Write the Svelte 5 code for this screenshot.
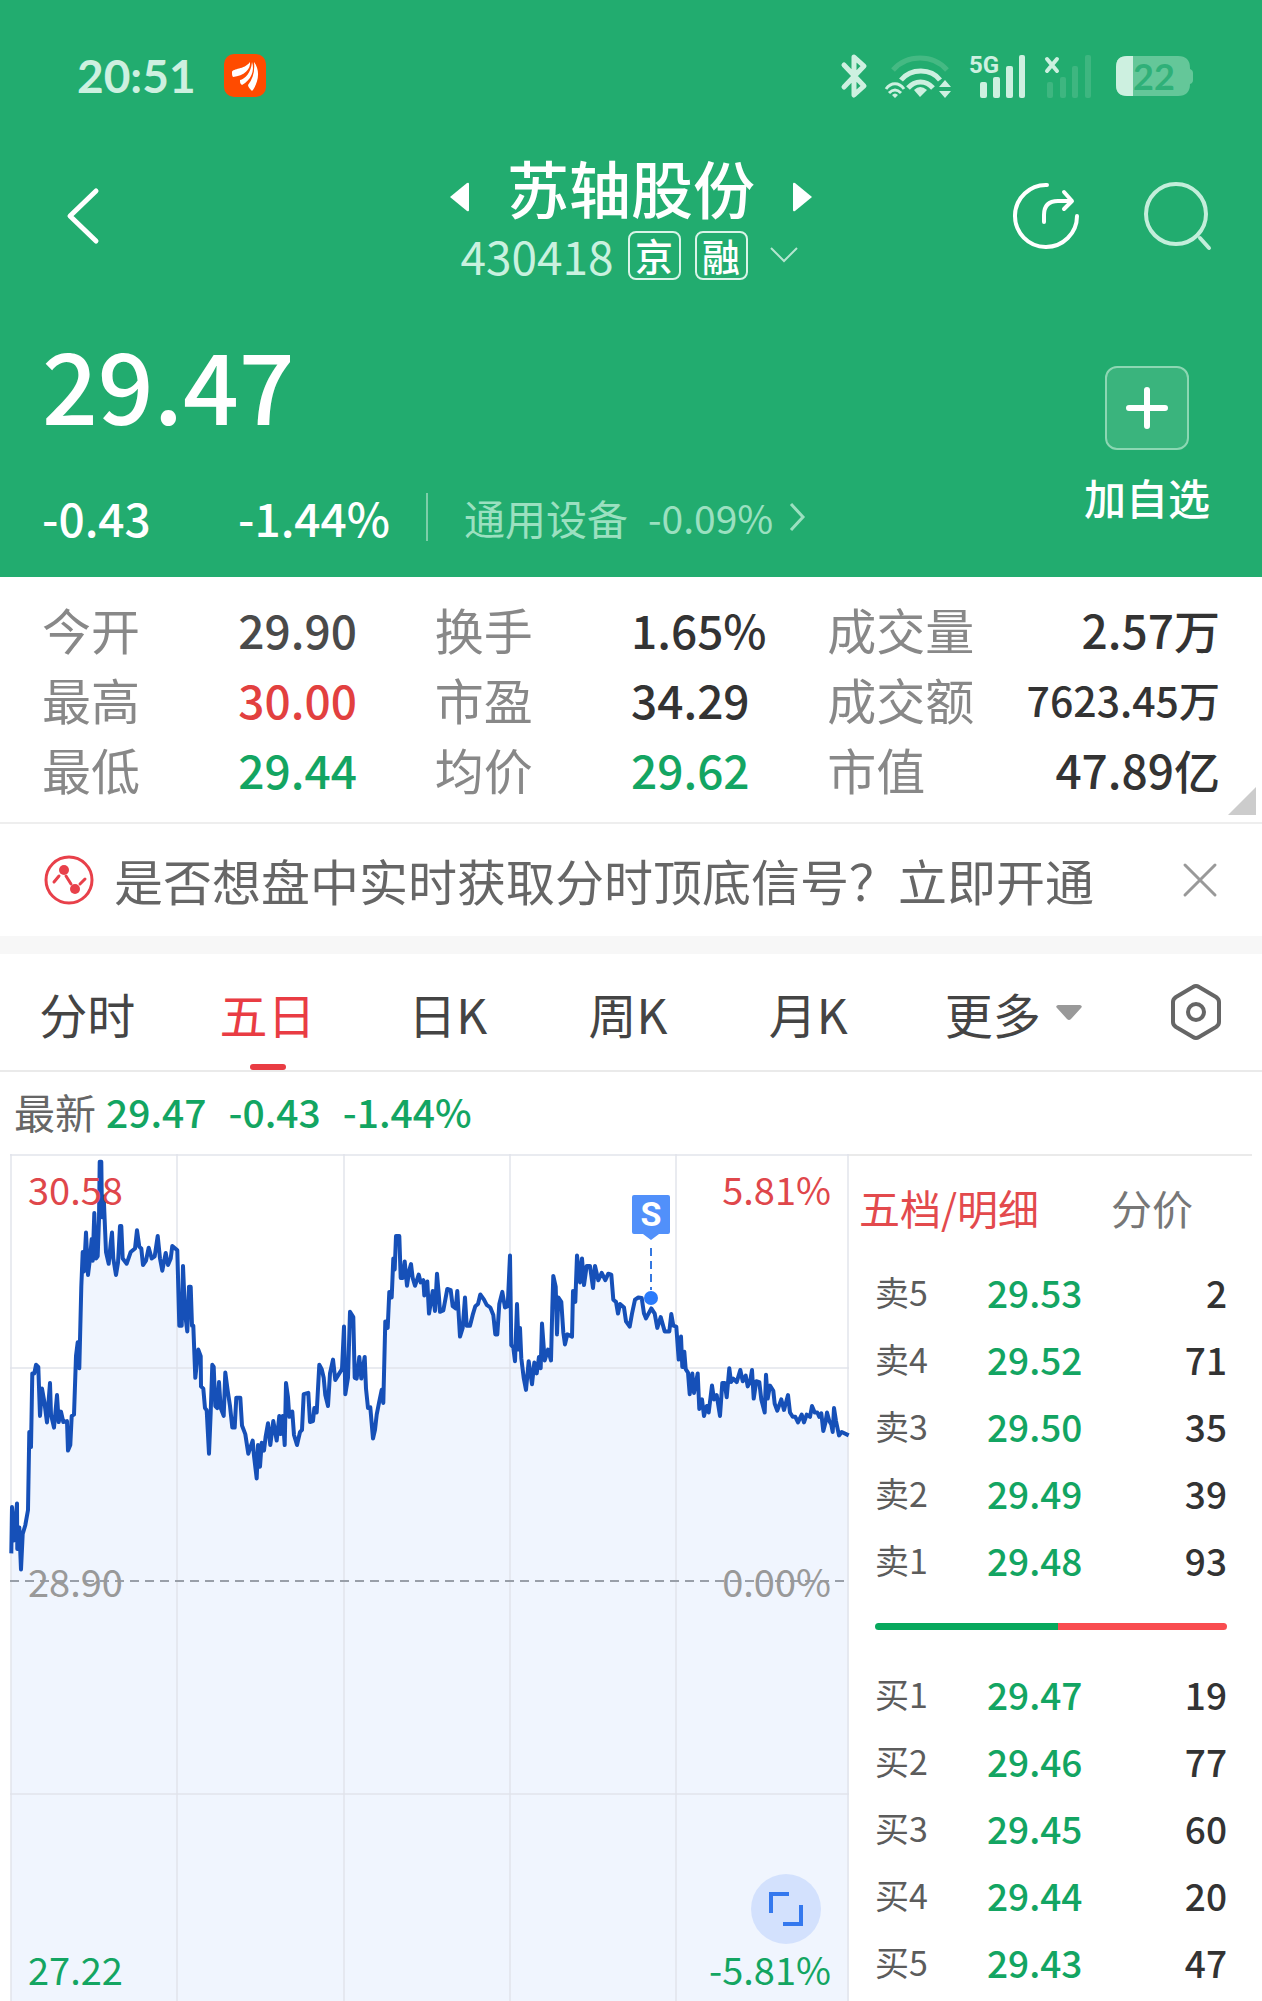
<script>
  let activeTab = $state('五日');
  let bookTab = $state('五档/明细');
  let showNotice = $state(true);

  const tabs = ['分时', '五日', '日K', '周K', '月K', '更多'];
  const bookTabs = ['五档/明细', '分价'];

  const stats = [
    { label: '今开', value: '29.90', tone: 'soft' },
    { label: '换手', value: '1.65%' },
    { label: '成交量', value: '2.57万' },
    { label: '最高', value: '30.00', tone: 'up' },
    { label: '市盈', value: '34.29' },
    { label: '成交额', value: '7623.45万', tone: 'long' },
    { label: '最低', value: '29.44', tone: 'down' },
    { label: '均价', value: '29.62', tone: 'down' },
    { label: '市值', value: '47.89亿' }
  ];

  const asks = [
    ['卖5', '29.53', 2],
    ['卖4', '29.52', 71],
    ['卖3', '29.50', 35],
    ['卖2', '29.49', 39],
    ['卖1', '29.48', 93]
  ];

  const bids = [
    ['买1', '29.47', 19],
    ['买2', '29.46', 77],
    ['买3', '29.45', 60],
    ['买4', '29.44', 20],
    ['买5', '29.43', 47]
  ];

  const sellShare = 52;

  // x y samples, each block counted from its own start
  const blocks = [
    {
      start: 0,
      samples:
        '34 1415 36 1308 42 1385 51 1300 52 1405 58 1355 63 1452 68 1370 76 1350 84 1315 88 1135 93 1170 97 1000 103 1000 108 980 115 985 120 1098 126 1035 133 1065 141 1113 150 1022 153 1095 162 1125 171 1050 176 1112 183 1088 190 1112 201 1110 204 1178 211 1165 215 1098 222 1095 228 960 233 928 238 988 244 800 248 720 252 765 258 675 264 773 270 735 275 690 278 740 283 630 288 735 293 730 297 645 299 512 304 512 306 640 311 592 318 720 326 747 332 700 336 675 340 735 348 773 354 745 360 660 364 660 368 735 380 747 392 720 405 712 411 670 418 708 424 712 429 750 438 740 446 710 455 735 464 730 473 683 480 735 487 763 497 722 504 750 512 735 517 706 532 716 538 890 545 890 549 752 555 860 562 903 567 800 572 800 576 890 580 890 586 1010 595 945 602 960 603 1030 610 1035 615 1080 620 1085 627 1185 632 1090 637 980 641 985 646 1075 652 1080 657 1020 662 1080 671 1098 676 998 683 1040 690 1075 697 1125 704 1125 709 1056 721 1056 726 1120 736 1140 745 1185 758 1155 762 1190 770 1242 774 1165 780 1215 785 1160 792 1178 797 1145 804 1115 811 1165 820 1110 830 1155 838 1098 842 1140 848 1098 854 1165 858 1022 864 1055 868 1100 877 1088 882 1142 891 1165 900 1135 906 1130 911 1048 925 1045 930 1112 939 1110 943 1080 950 1090 958 980 965 990 971 1010 976 1050 984 1075 990 1000 999 968 1006 1015 1018 1000 1026 990 1032 892 1036 1048 1044 1010 1050 858 1060 870 1064 1010 1070 1012 1078 962 1084 1012 1094 962 1098 1035 1104 1080 1111 1078 1119 1150 1125 1130 1130 1095 1137 1068 1145 1038 1150 1068 1156 880 1163 895 1168 812 1175 825 1180 735 1184 760 1188 683 1198 683 1202 780 1208 780 1214 742 1221 798 1228 762 1233 748 1238 780 1245 798 1256 772'
    },
    {
      start: 1260,
      samples:
        '2 790 10 785 13 820 22 788 27 862 38 810 45 856 51 770 57 825 60 858 70 855 82 805 92 808 98 845 107 850 112 810 120 915 128 895 135 825 140 890 150 890 158 865 166 845 174 840 181 818 192 830 200 842 211 848 220 865 226 910 232 910 238 840 247 812 255 848 263 845 270 728 274 935 280 940 285 972 291 840 296 945 300 895 304 965 311 1010 318 1038 326 972 336 1025 343 975 350 1000 357 962 362 988 366 885 374 970 384 945 393 970 397 850 400 775 407 800 411 910 415 825 424 835 430 905 435 933 442 910 456 915 459 810 466 835 471 728 480 790 486 735 492 796 500 752 510 752 519 803 525 752 535 785 545 768 556 785 565 770 574 772 580 830 588 835 594 862 600 840 612 848 618 880 629 892 636 862 645 830 655 825 665 826 672 862 678 873 694 850 704 862 712 895 722 870 734 903 748 903 754 863 760 890 769 892 776 968 783 915 787 985 793 950 797 990 804 998 809 1048 817 1000 822 1045 833 1000 838 1082 846 1060 852 1098 860 1075 866 1090 876 1028 882 1060 890 1050 900 1098 907 1022 914 1022 920 1055 928 988 933 1020 940 1012 950 1020 961 992 968 1018 977 1005 983 1030 990 1020 996 992 1001 1058 1009 1018 1018 1020 1024 1060 1034 1090 1038 1003 1043 1058 1050 1028 1060 1040 1064 1070 1072 1086 1084 1060 1092 1084 1104 1050 1110 1090 1118 1100 1126 1100 1134 1113 1145 1095 1152 1113 1160 1095 1170 1100 1176 1075 1184 1090 1192 1090 1198 1100 1204 1092 1210 1133 1216 1115 1221 1090 1228 1110 1234 1118 1238 1135 1242 1080 1248 1110 1257 1143 1265 1135 1286 1143'
    }
  ];

  function toPoints({ start, samples }) {
    const nums = samples.split(' ').map(Number);
    const out = [];
    for (let i = 0; i < nums.length; i += 2) {
      const x = (start + nums[i] - 30) / 3;
      const y = (nums[i + 1] - 494) / 2.306;
      out.push(`${x.toFixed(1)},${y.toFixed(1)}`);
    }
    return out;
  }

  const points = blocks.flatMap(toPoints);
  const line = points.join(' ');
  const area = `1,847 ${line} 839,847`;
  const gridX = [1, 167, 334, 500, 666, 838];
</script>

<main>
  <header class="top">
    <div class="status">
      <div class="status-side">
        <span class="clock">20:51</span>
        <svg class="app-icon" viewBox="0 0 42 43" width="42" height="43">
          <rect width="42" height="43" rx="10" fill="#ff4b00" />
          <g fill="#fff">
            <path d="M8 18C9 14 20 16 26 8C27 15 20 22 9 23C8 22 8 20 8 18Z" />
            <path d="M16 26C21 25 27 19 28 8C31 17 27 26 18 31C16 30 16 28 16 26Z" />
            <path d="M24 31C29 25 31 17 30 8C37 17 34 30 28 37C26 35 24 33 24 31Z" />
          </g>
        </svg>
      </div>
      <div class="status-side icons">
        <svg viewBox="0 0 26 44" width="26" height="44" fill="none" stroke="#cdf0e0" stroke-width="5" stroke-linejoin="round" stroke-linecap="round">
          <path d="M3 11L23 32L13 41V3L23 12L3 33" />
        </svg>
        <svg viewBox="0 0 66 44" width="66" height="44" fill="none" stroke-linecap="butt">
          <path d="M8 16C22 0 48 0 62 16" stroke="#45b983" stroke-width="5" />
          <path d="M16 26C26 14 46 14 55 26" stroke="#cdf0e0" stroke-width="5" />
          <path d="M23 34C30 26 41 26 48 34" stroke="#cdf0e0" stroke-width="5" />
          <path d="M29 36Q35 30 42 36L35 43Z" fill="#cdf0e0" />
          <path d="M1 35C6 28 14 28 19 35M4 39C8 35 12 35 16 39" stroke="#cdf0e0" stroke-width="3" />
          <path d="M7 41Q10 38 13 41L10 44ZM54 33L60 26L66 33ZM54 37L60 44L66 37Z" fill="#cdf0e0" />
        </svg>
        <svg viewBox="0 0 57 44" width="57" height="44">
          <text class="net" x="0" y="19">5G</text>
          <g fill="#cdf0e0">
            <rect x="11" y="28" width="7" height="16" rx="2" />
            <rect x="24" y="23" width="7" height="21" rx="2" />
            <rect x="37" y="12" width="7" height="32" rx="2" />
            <rect x="50" y="1" width="6" height="43" rx="2" />
          </g>
        </svg>
        <svg viewBox="0 0 48 44" width="48" height="44">
          <path d="M3 5L13 17M13 5L3 17" stroke="#cdf0e0" stroke-width="4" stroke-linecap="round" />
          <g fill="#3eb680">
            <rect x="3" y="28" width="6" height="16" rx="2" />
            <rect x="16" y="23" width="6" height="21" rx="2" />
            <rect x="28" y="12" width="6" height="32" rx="2" />
            <rect x="41" y="1" width="6" height="43" rx="2" />
          </g>
        </svg>
        <svg class="battery" viewBox="0 0 78 40" width="78" height="40">
          <path d="M11 0H62Q74 0 74 12V13Q77 14 77 17V24Q77 27 74 28Q74 40 62 40H11Q0 40 0 29V11Q0 0 11 0Z" fill="#64c799" />
          <path d="M11 0H17V40H11Q0 40 0 29V11Q0 0 11 0Z" fill="#cdf0e0" />
          <text class="charge" x="17" y="34">22</text>
        </svg>
      </div>
    </div>

    <nav class="nav">
      <button class="plain back" aria-label="返回">
        <svg viewBox="0 0 44 60" width="44" height="60" fill="none" stroke="#fff" stroke-width="5" stroke-linecap="round" stroke-linejoin="round">
          <path d="M36 5L10 30L36 55" />
        </svg>
      </button>
      <div class="title">
        <div class="name-row">
          <button class="plain" aria-label="上一只">
            <svg viewBox="0 0 20 30" width="20" height="30"><path d="M1 15L18 1Q20 0 20 2V28Q20 30 18 29Z" fill="#fff" /></svg>
          </button>
          <h1>苏轴股份</h1>
          <button class="plain" aria-label="下一只">
            <svg viewBox="0 0 20 30" width="20" height="30"><path d="M19 15L2 1Q0 0 0 2V28Q0 30 2 29Z" fill="#fff" /></svg>
          </button>
        </div>
        <div class="code-row">
          <span class="code">430418</span>
          <span class="badge">京</span>
          <span class="badge">融</span>
          <svg class="drop" viewBox="0 0 28 16" width="28" height="16" fill="none" stroke="#b5e6d0" stroke-width="2"><path d="M1 1L14 14L27 1" /></svg>
        </div>
      </div>
      <div class="actions">
        <button class="plain" aria-label="分享">
          <svg viewBox="0 0 68 68" width="68" height="68" fill="none" stroke="#fff" stroke-width="4" stroke-linecap="round" stroke-linejoin="round">
            <path d="M35 3A31 31 0 1 0 65 34" />
            <path d="M32 40V33Q32 19 46 19H59M52 10L60 19L52 27" />
          </svg>
        </button>
        <button class="plain" aria-label="搜索">
          <svg viewBox="0 0 68 68" width="68" height="68" fill="none" stroke="#c3eedb" stroke-width="4" stroke-linecap="round">
            <circle cx="32" cy="32" r="30" />
            <path d="M56 56L65 66" />
          </svg>
        </button>
      </div>
    </nav>

    <section class="quote">
      <div>
        <div class="price">29.47</div>
        <div class="change-row">
          <span class="change">-0.43</span>
          <span>-1.44%</span>
          <a class="sector" href="#sector">
            <span>通用设备</span>
            <span class="sector-change">-0.09%</span>
            <svg viewBox="0 0 16 28" width="16" height="28" fill="none" stroke="#9be0c0" stroke-width="3"><path d="M2 1L14 14L2 27" /></svg>
          </a>
        </div>
      </div>
      <button class="plain add">
        <span class="add-box">
          <svg viewBox="0 0 44 44" width="44" height="44" stroke="#fff" stroke-width="6" stroke-linecap="round"><path d="M22 4V40M4 22H40" /></svg>
        </span>
        加自选
      </button>
    </section>
  </header>

  <dl class="stats">
    {#each stats as stat}
      <dt>{stat.label}</dt>
      <dd class={stat.tone}>{stat.value}</dd>
    {/each}
  </dl>

  {#if showNotice}
    <div class="notice">
      <svg viewBox="0 0 50 50" width="50" height="50" fill="none" stroke="#e8404a" stroke-width="3">
        <circle cx="25" cy="25" r="23" />
        <path d="M10 27L15 21M22 21L27 29M36 29L41 24" stroke-linecap="round" />
        <circle cx="20" cy="15" r="5" fill="#e8404a" stroke="none" />
        <circle cx="31" cy="34" r="5" fill="#e8404a" stroke="none" />
      </svg>
      <a href="#signal">是否想盘中实时获取分时顶底信号？立即开通</a>
      <button class="plain" aria-label="关闭" onclick={() => (showNotice = false)}>
        <svg viewBox="0 0 34 34" width="34" height="34" stroke="#999" stroke-width="3" stroke-linecap="round"><path d="M2 2L32 32M32 2L2 32" /></svg>
      </button>
    </div>
  {/if}

  <div class="tabs">
    {#each tabs as tab}
      <button class="plain tab" class:active={activeTab === tab} class:more={tab === '更多'} onclick={() => (activeTab = tab)}>
        {tab}
        {#if tab === '更多'}
          <svg viewBox="0 0 26 16" width="26" height="16"><path d="M2 0H24Q27 1 25 3L15 14Q13 16 11 14L1 3Q-1 1 2 0Z" fill="#999" /></svg>
        {/if}
      </button>
    {/each}
    <button class="plain settings" aria-label="设置">
      <svg viewBox="0 0 52 56" width="52" height="56" fill="none" stroke="#666" stroke-width="4" stroke-linejoin="round">
        <path d="M23 3Q26 1 29 3L46 13Q49 15 49 18V38Q49 41 46 43L29 53Q26 55 23 53L6 43Q3 41 3 38V18Q3 15 6 13Z" />
        <circle cx="26" cy="28" r="8" />
      </svg>
    </button>
  </div>

  <div class="latest">
    <span class="latest-label">最新</span>
    <span>29.47</span>
    <span>-0.43</span>
    <span>-1.44%</span>
  </div>

  <div class="market">
    <div class="chart">
      <svg class="plot" viewBox="0 0 839 847">
        <polygon points={area} fill="#f0f5fe" />
        <g stroke="#dfe3ea" stroke-opacity="0.7" stroke-width="2">
          {#each gridX as x}
            <path d="M{x} 0V847" />
          {/each}
          <path d="M0 1H839M0 214H839M0 640H839" />
        </g>
        <path d="M0 427H839" stroke="#999fa9" stroke-width="2" stroke-dasharray="9 6" />
        <polyline points={line} fill="none" stroke="#1650b8" stroke-width="4" stroke-linejoin="round" />
        <path d="M641 94V136" stroke="#3578e0" stroke-width="2" stroke-dasharray="8 5" />
        <circle cx="641" cy="144" r="7" fill="#2a7bfb" />
        <path d="M624 41H658Q660 41 660 43V78Q660 80 658 80H649L641 86L633 80H624Q622 80 622 78V43Q622 41 624 41Z" fill="#5190fa" />
        <text class="signal" x="641" y="72" text-anchor="middle">S</text>
      </svg>
      <div class="axis high up"><span>30.58</span><span>5.81%</span></div>
      <div class="axis mid"><span>28.90</span><span>0.00%</span></div>
      <div class="axis low down"><span>27.22</span><span>-5.81%</span></div>
      <button class="plain expand" aria-label="全屏">
        <svg viewBox="0 0 34 34" width="34" height="34" fill="none" stroke="#3478ee" stroke-width="4"><path d="M2 21V2H20M32 13V32H14" /></svg>
      </button>
    </div>

    <aside class="book">
      <div class="book-tabs">
        {#each bookTabs as tab}
          <button class="plain" class:active={bookTab === tab} onclick={() => (bookTab = tab)}>{tab}</button>
        {/each}
      </div>
      {@render levels(asks)}
      <div class="ratio">
        <div class="sell" style="width: {sellShare}%"></div>
        <div class="buy"></div>
      </div>
      {@render levels(bids)}
    </aside>
  </div>
</main>

{#snippet levels(rows)}
  <table>
    <tbody>
      {#each rows as [name, price, volume]}
        <tr>
          <th scope="row">{name}</th>
          <td class="down">{price}</td>
          <td class="volume">{volume}</td>
        </tr>
      {/each}
    </tbody>
  </table>
{/snippet}

<style>
  :global(body) {
    margin: 0;
    background: #fff;
  }

  main {
    overflow: hidden;
    font-family: "Noto Sans CJK SC", sans-serif;
    color: #333;
    white-space: nowrap;
  }

  svg {
    display: block;
    flex: none;
    overflow: visible;
  }

  .plain {
    padding: 0;
    border: none;
    background: none;
    color: inherit;
    font: inherit;
    cursor: pointer;
  }

  a {
    color: inherit;
    text-decoration: none;
  }

  .up {
    color: #e2403f;
  }

  .down {
    color: #13a562;
  }

  .top {
    padding-bottom: 36px;
    background: #22ac6f;
    color: #fff;
  }

  .status {
    display: flex;
    align-items: center;
    justify-content: space-between;
    height: 151px;
    padding: 0 68px 0 77px;
  }

  .status-side {
    display: flex;
    align-items: center;
    gap: 28px;
  }

  .icons {
    gap: 18px;
  }

  .battery {
    margin-left: 6px;
  }

  .clock {
    font-family: Lato, sans-serif;
    font-size: 46px;
    font-weight: 700;
    line-height: 50px;
    color: #cdf0e0;
  }

  .net {
    font-family: Roboto, sans-serif;
    font-size: 24px;
    font-weight: 700;
    fill: #cdf0e0;
  }

  .charge {
    font-family: Lato, sans-serif;
    font-size: 36px;
    font-weight: 700;
    fill: #2fb078;
  }

  .nav {
    display: grid;
    grid-template-columns: 1fr auto 1fr;
    align-items: center;
    padding: 0 50px;
  }

  .back {
    justify-self: start;
    margin-left: 10px;
  }

  .name-row {
    display: flex;
    align-items: center;
    justify-content: center;
    gap: 38px;
  }

  .name-row .plain {
    padding-top: 20px;
  }

  h1 {
    margin: 0;
    font-size: 62px;
    font-weight: 500;
    line-height: 72px;
  }

  .code-row {
    display: flex;
    align-items: center;
    justify-content: center;
    gap: 14px;
    height: 52px;
    margin-top: 6px;
    padding-right: 4px;
  }

  .code {
    font-size: 46px;
    line-height: 52px;
    color: #c9f1df;
  }

  .badge {
    box-sizing: border-box;
    width: 53px;
    height: 49px;
    border: 2px solid #d9f4e8;
    border-radius: 8px;
    font-size: 38px;
    font-weight: 500;
    line-height: 44px;
    text-align: center;
  }

  .drop {
    margin-left: 8px;
  }

  .actions {
    display: flex;
    gap: 64px;
    justify-self: end;
  }

  .quote {
    display: flex;
    align-items: flex-start;
    justify-content: space-between;
    padding: 46px 52px 0 42px;
  }

  .price {
    font-size: 98px;
    font-weight: 500;
    line-height: 110px;
  }

  .change-row {
    display: flex;
    align-items: center;
    margin-top: 56px;
    font-size: 46px;
    font-weight: 500;
    line-height: 48px;
  }

  .change {
    width: 196px;
  }

  .sector {
    display: flex;
    align-items: center;
    gap: 20px;
    margin-left: 36px;
    padding-left: 36px;
    border-left: 2px solid #7dcea9;
    font-size: 41px;
    font-weight: 400;
    color: #9be0c0;
  }

  .sector-change {
    margin-right: -4px;
    font-size: 39px;
  }

  .add {
    display: flex;
    flex-direction: column;
    align-items: center;
    gap: 22px;
    margin-top: 39px;
    font-size: 42px;
    font-weight: 500;
    line-height: 50px;
  }

  .add-box {
    box-sizing: border-box;
    display: flex;
    align-items: center;
    justify-content: center;
    width: 84px;
    height: 84px;
    border: 2px solid #8cd7b3;
    border-radius: 12px;
    background: #3ab47d;
  }

  .stats {
    position: relative;
    display: grid;
    grid-template-columns: repeat(6, 1fr);
    margin: 0;
    padding: 17px 42px 18px;
    border-bottom: 2px solid #eee;
    font-size: 46px;
    line-height: 70px;
  }

  .stats::after {
    content: "";
    position: absolute;
    right: 6px;
    bottom: 7px;
    border-bottom: 28px solid #ccc;
    border-left: 28px solid transparent;
  }

  .stats dt {
    font-size: 49px;
    color: #888;
  }

  .stats dd {
    display: flex;
    margin: 0;
    font-weight: 500;
  }

  .stats dd:nth-of-type(3n) {
    justify-content: flex-end;
  }

  .stats .soft {
    color: #4a4a4a;
  }

  .stats .long {
    font-size: 41px;
  }

  .notice {
    display: flex;
    align-items: center;
    height: 112px;
    padding: 0 45px 0 44px;
    font-size: 49px;
    line-height: 60px;
    color: #666;
  }

  .notice a {
    flex: 1;
    margin-left: 20px;
  }

  .tabs {
    display: grid;
    grid-template-columns: repeat(7, 1fr);
    height: 116px;
    border-top: 18px solid #f7f7f7;
    border-bottom: 2px solid #eaeaea;
    font-size: 48px;
    line-height: 60px;
    color: #444;
  }

  .tab {
    position: relative;
    padding: 2px 6px 0 0;
  }

  .tab.active {
    color: #e93c43;
  }

  .tab.active::after {
    content: "";
    position: absolute;
    bottom: 0;
    left: 50%;
    width: 36px;
    height: 6px;
    margin-left: -20px;
    border-radius: 3px;
    background: #e93c43;
  }

  .more {
    display: flex;
    align-items: center;
    justify-content: flex-end;
    gap: 15px;
    padding-right: 0;
  }

  .settings {
    justify-self: end;
    padding-right: 40px;
  }

  .latest {
    display: flex;
    align-items: center;
    gap: 22px;
    height: 78px;
    padding: 0 14px 4px;
    font-size: 39px;
    font-weight: 500;
    line-height: 60px;
    color: #13a562;
  }

  .latest-label {
    margin-right: -12px;
    font-size: 41px;
    font-weight: 400;
    color: #666;
  }

  .market {
    display: grid;
    grid-template-columns: 839fr 403fr;
    align-items: start;
    padding: 0 10px;
  }

  .chart {
    position: relative;
    min-width: 0;
  }

  .plot {
    width: 100%;
    height: auto;
  }

  .signal {
    font-family: Roboto, sans-serif;
    font-size: 34px;
    font-weight: 700;
    fill: #fff;
  }

  .axis {
    position: absolute;
    left: 0;
    right: 0;
    display: flex;
    justify-content: space-between;
    padding: 0 18px;
    font-size: 38px;
    line-height: 40px;
  }

  .high {
    top: 15px;
    color: #df474b;
  }

  .mid {
    top: 48%;
    color: #999;
  }

  .low {
    bottom: 12px;
  }

  .expand {
    position: absolute;
    right: 28px;
    bottom: 57px;
    display: flex;
    align-items: center;
    justify-content: center;
    width: 70px;
    height: 70px;
    border-radius: 50%;
    background: #d3e1fd;
  }

  .book {
    min-width: 0;
    padding: 0 25px 0 26px;
    border-top: 2px solid #eaeaea;
  }

  .book-tabs {
    display: flex;
    justify-content: space-between;
    margin-left: -16px;
    padding-right: 34px;
    font-size: 41px;
    line-height: 102px;
    color: #777;
  }

  .book-tabs .active {
    color: #e34a4d;
  }

  table {
    width: 100%;
    border-collapse: collapse;
    table-layout: fixed;
  }

  th,
  td {
    height: 67px;
    padding: 0;
    font-size: 37px;
    font-weight: 500;
    line-height: 60px;
    text-align: left;
  }

  th {
    width: 112px;
    font-size: 34px;
    font-weight: 400;
    color: #5c5c5c;
  }

  .volume {
    text-align: right;
  }

  .ratio {
    display: flex;
    height: 7px;
    margin: 30px 0;
    border-radius: 4px;
    overflow: hidden;
  }

  .sell {
    background: #07a85d;
  }

  .buy {
    flex: 1;
    background: #f94d50;
  }
</style>
